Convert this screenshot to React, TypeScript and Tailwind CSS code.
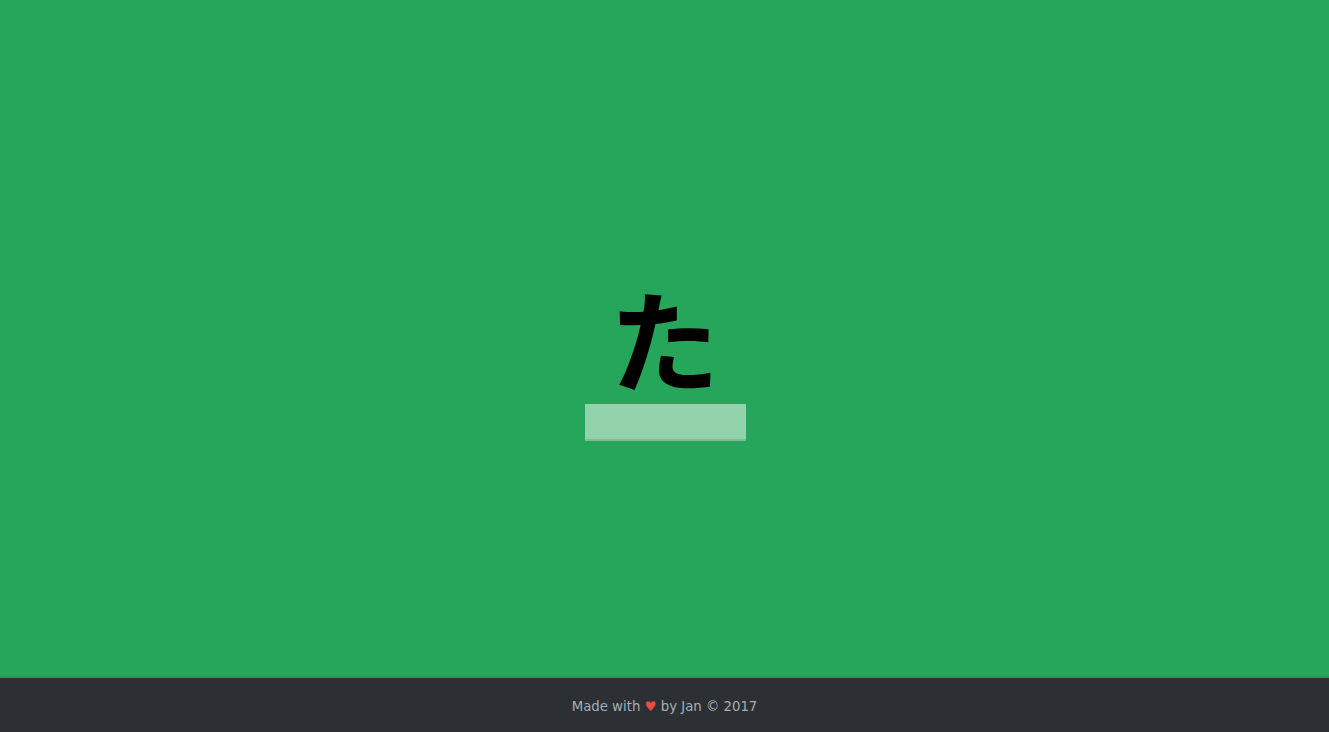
export default function App() {
  return (
    <div className="flex h-[732px] w-full flex-col bg-[#26a65b]">
      <main className="flex flex-1 flex-col items-center justify-center pt-[41px]">
        <div className="text-[110px] font-bold leading-[120px] text-black [font-family:'Noto_Sans_CJK_JP',sans-serif]">
          た
        </div>
        <input
          type="text"
          className="ml-[2px] mt-[8px] h-[37px] w-[161px] border-0 border-b-2 border-b-[#7cbf95] bg-[#93d3ab] text-center outline-none"
        />
      </main>
      <footer className="flex h-[56px] items-center justify-center border-t-2 border-t-[#239a54] bg-[#2c2f34] pt-[4px] text-[13.3px] text-[#a7aeb6] [font-family:'DejaVu_Sans',sans-serif]">
        <span>
          Made with <span className="text-[#e74c3c]">♥</span> by Jan © 2017
        </span>
      </footer>
    </div>
  );
}
